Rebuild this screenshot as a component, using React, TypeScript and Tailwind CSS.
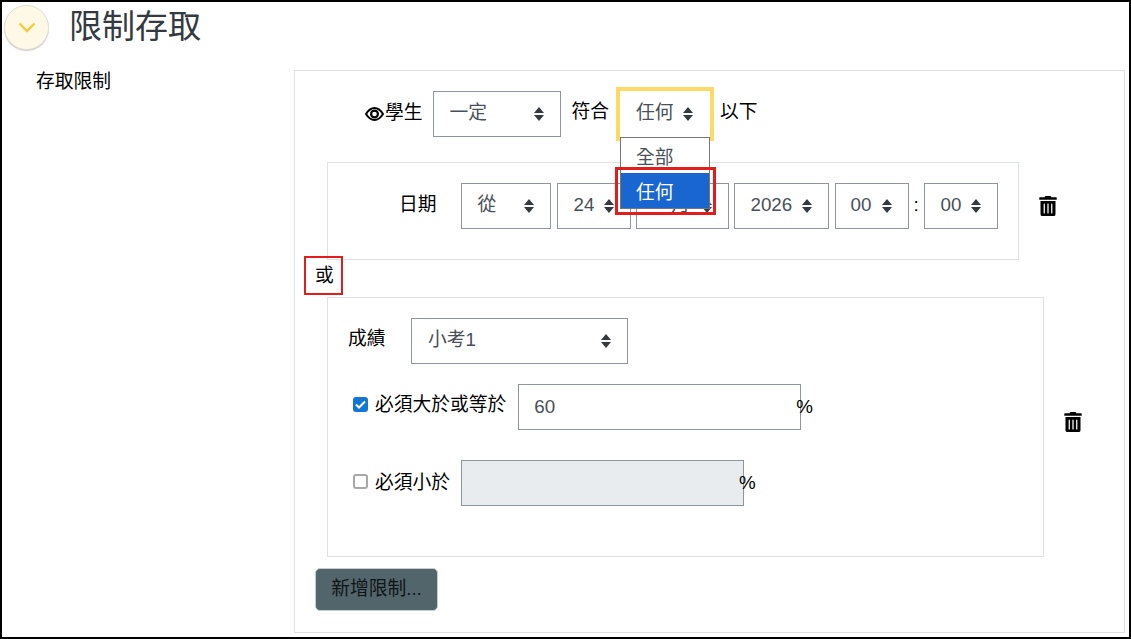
import { FaTrashAlt } from "react-icons/fa";

const font = "font-['Liberation_Sans','Noto_Sans_CJK_TC',sans-serif]";

function Arrows() {
	return (
		<svg width="10" height="14" viewBox="0 0 10 14" className="shrink-0">
			<path d="M5 0 L10 6 H0 Z" fill="#343a40" />
			<path d="M5 14 L10 8 H0 Z" fill="#343a40" />
		</svg>
	);
}

function Select({ text, className }: { text: string; className: string }) {
	return (
		<div
			className={`flex h-[46px] shrink-0 items-center justify-between border border-[#8f959e] bg-white pr-[16px] text-[18.75px] text-[#495057] ${className}`}
		>
			<span className="-translate-y-[1px]">{text}</span>
			<Arrows />
		</div>
	);
}

function Trash() {
	return <FaTrashAlt className="h-5 w-[18px] text-black" />;
}

function Eye() {
	return (
		<svg width="19" height="14" viewBox="0 0 19 14" fill="none" className="mr-[1px] shrink-0">
			<path
				d="M1 7 C3.5 3 6.5 1 9.5 1 C12.5 1 15.5 3 18 7 C15.5 11 12.5 13 9.5 13 C6.5 13 3.5 11 1 7 Z"
				stroke="black"
				strokeWidth="2"
			/>
			<circle cx="9.5" cy="7" r="3.4" stroke="black" strokeWidth="2.2" />
		</svg>
	);
}

export default function App() {
	return (
		<div
			className={`relative h-[639px] w-[1131px] overflow-hidden border-2 border-black bg-white leading-none text-black ${font}`}
		>
			<div className="ml-[2px] mt-[3px] flex items-center">
				<div className="flex h-[45px] w-[45px] items-center justify-center rounded-full border border-[#e3e0d2] bg-[#fef9e7] shadow-[0_1px_1px_rgba(0,0,0,0.2)]">
					<svg width="18" height="11" viewBox="0 0 18 11" fill="none">
						<path d="M1.5 1.5 L9 9 L16.5 1.5" stroke="#fdca3c" strokeWidth="2.4" />
					</svg>
				</div>
				<h2 className="ml-[20px] -translate-y-[1px] text-[33px] text-[#343a40]">限制存取</h2>
			</div>

			<div className="mt-[20px] flex items-start">
				<div className="ml-[34px] mt-[3px] w-[258px] text-[18.75px]">存取限制</div>

				<div className="relative h-[563px] w-[831px] shrink-0 border border-[#dee2e6]">
					<div className="ml-[70px] mt-[20px] flex h-[46px] items-center text-[18.75px]">
						<Eye />
						<span className="mr-[10px] -translate-y-[1px]">學生</span>
						<Select text="一定" className="w-[128px] pl-4" />
						<span className="ml-[11px] mr-[7px] -translate-y-[2px]">符合</span>
						<div className="border-4 border-[#fdd966]">
							<Select text="任何" className="w-[90px] !border-white pl-[15px]" />
						</div>
						<span className="ml-[6px] -translate-y-[2px]">以下</span>
					</div>

					<div className="ml-[32px] mt-[25px] flex h-[98px] w-[692px] items-start border border-[#dee2e6] pl-[71px] pt-[20px] text-[18.75px]">
						<span className="mr-[24px] mt-[13px] shrink-0 whitespace-nowrap">日期</span>
						<div className="flex items-center">
							<Select text="從" className="w-[90px] pl-4" />
							<Select text="24" className="ml-[6px] w-[74px] pl-4" />
							<Select text="一月" className="ml-[5px] w-[93px] pl-4" />
							<Select text="2026" className="ml-[5px] w-[95px] pl-4" />
							<Select text="00" className="ml-[6px] w-[74px] pl-[15px]" />
							<span className="mx-[4px] w-[7px] -translate-y-[1px] text-center">:</span>
							<Select text="00" className="w-[74px] pl-4" />
						</div>
						<div className="ml-[41px] mt-[13px] shrink-0">
							<Trash />
						</div>
					</div>

					<div className="ml-[20px] mt-[3px] text-[18.75px] leading-[25px]">或</div>

					<div className="flex items-start">
						<div className="ml-[32px] mt-[9px] h-[260px] w-[717px] border border-[#dee2e6] pl-[20px] pt-[20px] text-[18.75px]">
							<div className="flex items-center">
								<span className="w-[63px] -translate-y-[2px]">成績</span>
								<Select text="小考1" className="w-[217px] pl-4" />
							</div>
							<div className="ml-[5px] mt-[20px] flex items-center">
								<span className="mb-[6px] flex h-[15px] w-[15px] items-center justify-center rounded-[3px] bg-[#1177d1]">
									<svg width="11" height="9" viewBox="0 0 11 9" fill="none">
										<path d="M1 4.5 L4 7.5 L10 1.5" stroke="white" strokeWidth="2" />
									</svg>
								</span>
								<span className="ml-[7px] -translate-y-[2px]">必須大於或等於</span>
								<div className="ml-[12px] flex h-[46px] w-[283px] items-center border border-[#8f959e] pl-[15px] text-[#495057]">60</div>
								<span className="-ml-[5px]">%</span>
							</div>
							<div className="ml-[5px] mt-[30px] flex items-center">
								<span className="mb-[3px] h-[15px] w-[15px] rounded-[3px] border-2 border-[#a8a8a8] bg-white" />
								<span className="ml-[7px]">必須小於</span>
								<div className="ml-[11px] h-[46px] w-[283px] border border-[#8f959e] bg-[#e9ecef]" />
								<span className="-ml-[5px]">%</span>
							</div>
						</div>
						<div className="ml-[20px] mt-[124px] shrink-0">
							<Trash />
						</div>
					</div>

					<button className="ml-[20px] mt-[11px] flex h-[43px] w-[123px] items-center justify-center rounded-[5px] border border-[#c5ccd0] bg-[#52656b] text-[18.75px] text-[#101416]">
						新增限制...
					</button>

					{/* open dropdown of the 任何 select */}
					<div className="absolute left-[325px] top-[66px] w-[90px] border border-[#767676] bg-white text-[18.75px]">
						<div className="flex h-[35px] items-center pl-[15px] pt-[5px] text-[#495057]">全部</div>
						<div className="flex h-[35px] items-center bg-[#1a66d0] pl-[15px] pt-[5px] text-white">任何</div>
					</div>

					{/* red highlight boxes */}
					<div className="absolute left-[320px] top-[96px] h-[48px] w-[101px] border-[3px] border-[#e31c1c]" />
					<div className="absolute left-[9px] top-[185px] h-[39px] w-[39px] border-2 border-[#e31c1c]" />
				</div>
			</div>
		</div>
	);
}
